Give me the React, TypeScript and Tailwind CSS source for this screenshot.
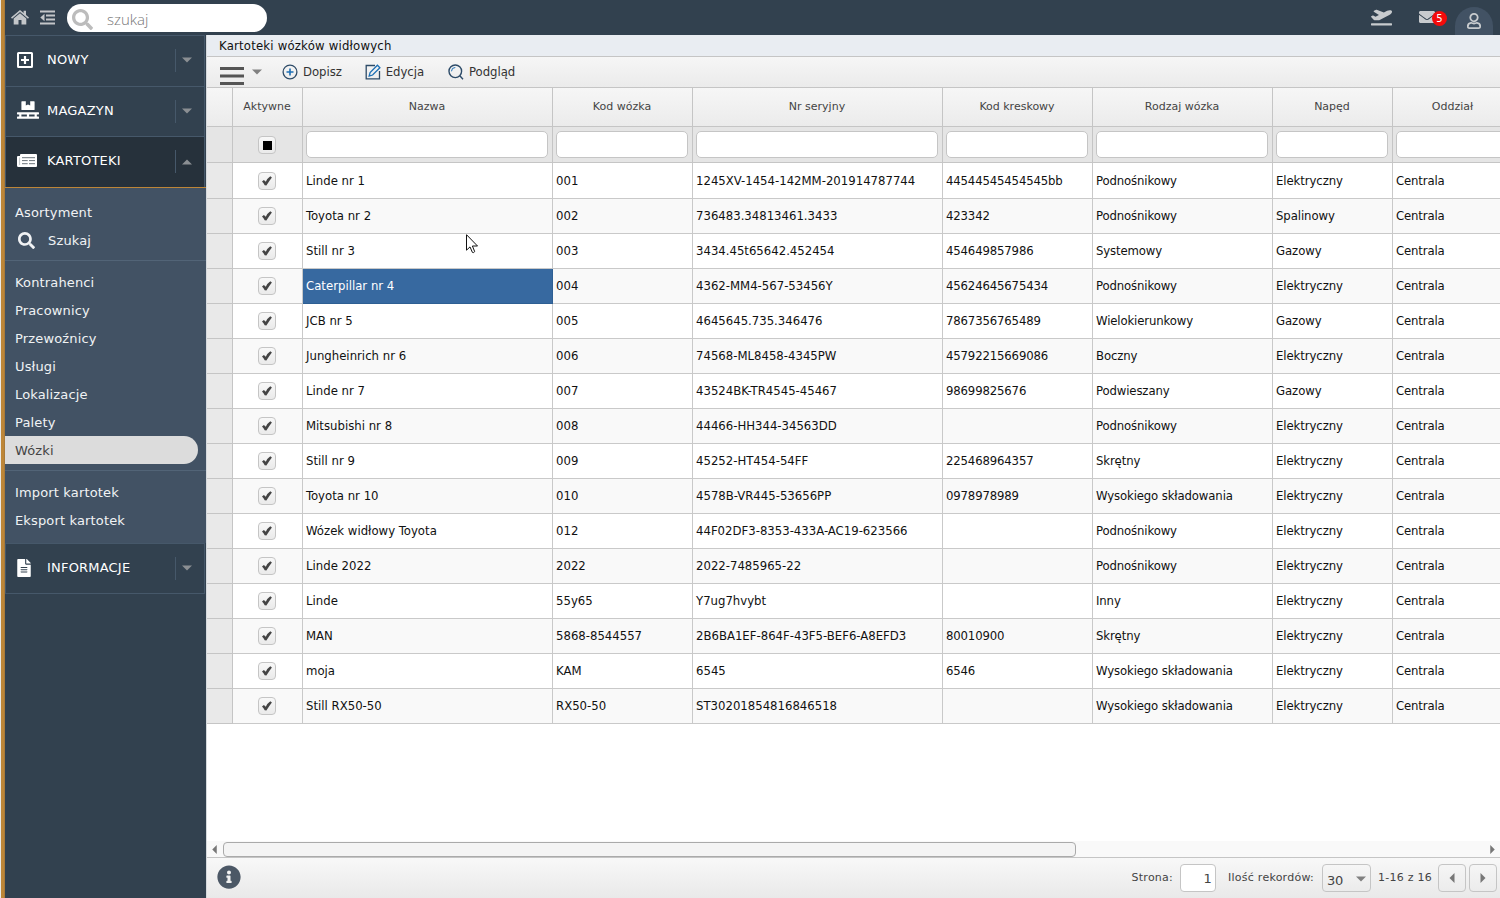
import React, { useState } from 'react';
import { FaSearch, FaPlaneDeparture, FaEnvelope, FaPallet, FaFileAlt, FaInfoCircle } from 'react-icons/fa';

interface Truck {
  name: string;
  code: string;
  serial: string;
  barcode: string;
  kind: string;
  drive: string;
}

const COLUMNS = ['Nazwa', 'Kod wózka', 'Nr seryjny', 'Kod kreskowy', 'Rodzaj wózka', 'Napęd', 'Oddział'];

const ROW = 'grid w-[1307px] grid-cols-[26px_70px_250px_140px_250px_150px_180px_120px_121px]';

const TRUCKS: Truck[] = [
  { name: 'Linde nr 1', code: '001', serial: '1245XV-1454-142MM-201914787744', barcode: '44544545454545bb', kind: 'Podnośnikowy', drive: 'Elektryczny' },
  { name: 'Toyota nr 2', code: '002', serial: '736483.34813461.3433', barcode: '423342', kind: 'Podnośnikowy', drive: 'Spalinowy' },
  { name: 'Still nr 3', code: '003', serial: '3434.45t65642.452454', barcode: '454649857986', kind: 'Systemowy', drive: 'Gazowy' },
  { name: 'Caterpillar nr 4', code: '004', serial: '4362-MM4-567-53456Y', barcode: '45624645675434', kind: 'Podnośnikowy', drive: 'Elektryczny' },
  { name: 'JCB nr 5', code: '005', serial: '4645645.735.346476', barcode: '7867356765489', kind: 'Wielokierunkowy', drive: 'Gazowy' },
  { name: 'Jungheinrich nr 6', code: '006', serial: '74568-ML8458-4345PW', barcode: '45792215669086', kind: 'Boczny', drive: 'Elektryczny' },
  { name: 'Linde nr 7', code: '007', serial: '43524BK-TR4545-45467', barcode: '98699825676', kind: 'Podwieszany', drive: 'Gazowy' },
  { name: 'Mitsubishi nr 8', code: '008', serial: '44466-HH344-34563DD', barcode: '', kind: 'Podnośnikowy', drive: 'Elektryczny' },
  { name: 'Still nr 9', code: '009', serial: '45252-HT454-54FF', barcode: '225468964357', kind: 'Skrętny', drive: 'Elektryczny' },
  { name: 'Toyota nr 10', code: '010', serial: '4578B-VR445-53656PP', barcode: '0978978989', kind: 'Wysokiego składowania', drive: 'Elektryczny' },
  { name: 'Wózek widłowy Toyota', code: '012', serial: '44F02DF3-8353-433A-AC19-623566', barcode: '', kind: 'Podnośnikowy', drive: 'Elektryczny' },
  { name: 'Linde 2022', code: '2022', serial: '2022-7485965-22', barcode: '', kind: 'Podnośnikowy', drive: 'Elektryczny' },
  { name: 'Linde', code: '55y65', serial: 'Y7ug7hvybt', barcode: '', kind: 'Inny', drive: 'Elektryczny' },
  { name: 'MAN', code: '5868-8544557', serial: '2B6BA1EF-864F-43F5-BEF6-A8EFD3', barcode: '80010900', kind: 'Skrętny', drive: 'Elektryczny' },
  { name: 'moja', code: 'KAM', serial: '6545', barcode: '6546', kind: 'Wysokiego składowania', drive: 'Elektryczny' },
  { name: 'Still RX50-50', code: 'RX50-50', serial: 'ST30201854816846518', barcode: '', kind: 'Wysokiego składowania', drive: 'Elektryczny' },
];

const Caret = ({ className, dir = 'down' }: { className?: string; dir?: 'down' | 'up' | 'left' | 'right' }) => {
  const paths = { down: 'M0 2.5h10L5 7.5z', up: 'M0 7.5h10L5 2.5z', left: 'M7.5 0v10L2.5 5z', right: 'M2.5 0v10L7.5 5z' };
  return (
    <svg viewBox="0 0 10 10" className={className} fill="currentColor">
      <path d={paths[dir]} />
    </svg>
  );
};

const HomeIcon = () => (
  <svg viewBox="0 0 18 15" className="h-[15px] w-[18px]" fill="#c3c6c9">
    <path d="M9 0 0 7.6l1 1.1L9 2l8 6.7 1-1.1-3-2.5V.8h-2.4v2.3z" />
    <path d="M9 3.3 2.7 8.6V14.4h4.8V10h3v4.4h4.8V8.6z" />
  </svg>
);

const OutdentIcon = () => (
  <svg viewBox="0 0 15 15" className="h-[15px] w-[15px]" fill="#c3c6c9">
    <path d="M0 .5h15v2H0zM6 4.5h9v2H6zM6 8.5h9v2H6zM0 12.5h15v2H0zM4.5 3.8v7.4L.3 7.5z" />
  </svg>
);

const PlusSquareIcon = () => (
  <svg viewBox="0 0 16 16" className="h-4 w-4" fill="none" stroke="#fff" strokeWidth="2">
    <rect x="1" y="1" width="14" height="14" rx="0.5" />
    <path d="M8 4v8M4 8h8" strokeWidth="2.2" />
  </svg>
);

const CardIcon = () => (
  <svg viewBox="0 0 20 14" className="h-[14px] w-5">
    <path d="M0 3q0-1 1-1h2V1q0-1 1-1h15q1 0 1 1v11q0 1-1 1H1.500Q0 13 0 11.500z" fill="#fff" />
    <path d="M2.600 3.500v7.500" stroke="#9ba1a6" strokeWidth=".6" />
    <path d="M5 3.700h13M5 6.600h5.700M12 6.600h6M5 9.700h5.700M12 9.700h6" stroke="#6b737a" strokeWidth="1" />
  </svg>
);

const UserIcon = () => (
  <svg viewBox="0 0 14 16" className="h-4 w-[14px]" fill="none" stroke="#c8cbce" strokeWidth="1.800">
    <circle cx="7" cy="4.600" r="3.700" />
    <path d="M4 9.800q3 1.400 6 0 3.200.5 3.200 3.600 0 1.700-1.500 1.700H2.300q-1.500 0-1.500-1.700 0-3.100 3.200-3.600z" />
  </svg>
);

const CheckBox = ({ mixed }: { mixed?: boolean }) => (
  <span className="flex h-[18px] w-[18px] items-center justify-center rounded-[4px] border border-[#c5c5c5] bg-gradient-to-b from-[#f8f8f8] to-[#eaeaea]">
    {mixed ? (
      <span className="h-[9px] w-[9px] bg-black"></span>
    ) : (
      <svg viewBox="0 0 10 10" className="h-[10px] w-[10px]" fill="#444">
        <path d="M0 5.600 1.900 4 3.800 5.800Q5.500 2 8.300.2L9.900 1.400Q7.300 4.700 4.400 9.500L2.700 9.300Q1.700 7 0 5.600z" />
      </svg>
    )}
  </span>
);

interface SectionProps {
  icon: React.ReactNode;
  label: string;
  className: string;
}

const Section = ({ icon, label, className }: SectionProps) => {
  const open = label === 'KARTOTEKI';
  return (
    <button className={`flex w-full items-center border-r border-r-[#46586a] pb-[2px] pl-[11px] text-[13px] text-white ${className}`}>
      <span className="flex w-[30px] shrink-0 items-center">{icon}</span>
      <span className="flex-1 text-left tracking-[0.2px]">{label}</span>
      <span className="mt-px flex h-[23px] w-[29px] items-center border-l border-[#46586a] pl-[6px] text-[#8b8f93]">
        <Caret dir={open ? 'up' : 'down'} className="h-[10px] w-[10px]" />
      </span>
    </button>
  );
};

const LINKS = ['Kontrahenci', 'Pracownicy', 'Przewoźnicy', 'Usługi', 'Lokalizacje', 'Palety', 'Wózki'];

const Sidebar = ({ active }: { active: string }) => (
  <nav className="flex w-[201px] shrink-0 flex-col bg-[#32414f] font-['DejaVu_Sans',sans-serif]">
    <div className="mr-px flex flex-col gap-px bg-[#46586a] pt-px pl-px">
      <Section className="h-[50px] bg-[#32414f] pb-[3px]!" icon={<PlusSquareIcon />} label="NOWY" />
      <Section className="h-[49px] bg-[#32414f]" icon={<FaPallet className="mb-[2px] h-[22px] w-[22px] text-white" />} label="MAGAZYN" />
      <Section className="h-[50px] bg-[#26313b]" icon={<CardIcon />} label="KARTOTEKI" />
    </div>
    <div className="h-px bg-[#bd8638]"></div>
    <div className="h-[355px] bg-[#425264] pt-[10px] text-[13px] tracking-[0.15px] text-[#f0f2f4]">
      <div className="flex h-7 items-center pt-[2px] pl-[10px]">Asortyment</div>
      <div className="flex h-7 items-center gap-[13px] pl-[13px]">
        <FaSearch className="h-[17px] w-[17px]" />
        <span className="pt-[2px]">Szukaj</span>
      </div>
      <div className="mt-[6px] mb-[7px] h-px bg-[#526477]"></div>
      {LINKS.map(link => (
        <div
          key={link}
          className={`flex h-7 items-center pt-[2px] pl-[10px] ${link === active ? 'mr-2 rounded-r-full bg-[#dcdcdc] text-[#444]' : ''}`}
        >
          {link}
        </div>
      ))}
      <div className="mt-[6px] mb-[7px] h-px bg-[#526477]"></div>
      <div className="flex h-7 items-center pt-[2px] pl-[10px]">Import kartotek</div>
      <div className="flex h-7 items-center pt-[2px] pl-[10px]">Eksport kartotek</div>
    </div>
    <div className="mr-px border-b border-[#46586a] bg-[#46586a] pt-px pl-px">
      <Section className="h-[49px] bg-[#32414f]" icon={<FaFileAlt className="h-[18px] w-[14px]" />} label="INFORMACJE" />
    </div>
  </nav>
);

const TopBar = () => (
  <header className="flex h-[35px] shrink-0 items-center bg-[#32414f] pl-[6px]">
    <HomeIcon />
    <span className="ml-[11px]"><OutdentIcon /></span>
    <label className="ml-3 flex h-7 w-[200px] items-center rounded-full bg-white pl-[5px]">
      <FaSearch className="mt-[3px] h-[21px] w-[21px] shrink-0 text-[#bcbcbc]" />
      <input placeholder="szukaj" className="mt-[3px] ml-[14px] w-32 font-['Open_Sans',sans-serif] text-[15px] font-light outline-none placeholder:text-[#777]" />
    </label>
    <div className="ml-auto flex h-full items-center">
      <FaPlaneDeparture className="mb-px h-[20px] w-[21px] text-[#c8cbce]" />
      <span className="relative ml-[27px]">
        <FaEnvelope className="mb-px h-4 w-4 text-[#c8cbce]" />
        <span className="absolute top-[2px] left-[13px] flex h-[15px] w-[15px] items-center justify-center rounded-full bg-[#f40b0b] font-['DejaVu_Sans',sans-serif] text-[10px] text-white">5</span>
      </span>
      <span className="mr-[7px] ml-[20px] flex h-7 w-[38px] items-start justify-center self-end rounded-t-full bg-[#425264] pt-[6px]">
        <UserIcon />
      </span>
    </div>
  </header>
);

const Toolbar = () => (
  <div className="flex h-[31px] shrink-0 items-center border-b border-[#c5c5c5] bg-gradient-to-b from-[#f6f6f6] to-[#ebebeb] pl-[13px] text-[13px] tracking-[-0.05px] text-[#333]">
    <button className="flex items-center">
      <svg viewBox="0 0 24 18" className="mt-[7px] h-[18px] w-6" fill="#555">
        <path d="M0 0h24v3H0zM0 7.500h24v3H0zM0 15h24v3H0z" />
      </svg>
      <Caret className="ml-2 h-[10px] w-[10px] text-[#808080]" />
    </button>
    <button className="ml-5 flex items-center gap-[5px]">
      <svg viewBox="0 0 16 16" className="h-4 w-4" fill="none" stroke="#2d4b68" strokeWidth="1.300">
        <circle cx="8" cy="8" r="6.900" />
        <path d="M8 4.500v7M4.500 8h7" stroke="#1c6fb5" strokeWidth="1.600" />
      </svg>
      Dopisz
    </button>
    <button className="ml-[23px] flex items-center gap-[5px]">
      <svg viewBox="0 0 16 16" className="h-4 w-4" fill="none" stroke="#2d4b68" strokeWidth="1.300">
        <path d="M10 1.500H1.200v13.300h13.300V7" />
        <path d="m4.200 12 .9-3.500 7.300-7.300 2.500 2.500L7.600 11z" stroke="#1c6fb5" />
      </svg>
      Edycja
    </button>
    <button className="ml-6 flex items-center gap-[5px]">
      <svg viewBox="0 0 16 16" className="h-4 w-4" fill="none" stroke="#2d4b68" strokeWidth="1.400">
        <circle cx="7.300" cy="7.300" r="6.300" />
        <path d="m11.800 11.800 3.200 3.500" />
        <path d="M3.500 7.300a3.800 3.800 0 0 1 3.800-3.800" stroke="#1c6fb5" strokeWidth="1" />
      </svg>
      Podgląd
    </button>
  </div>
);

const TruckRow = ({ truck, index, selected, onSelect }: { truck: Truck; index: number; selected: boolean; onSelect: () => void }) => {
  const cell = 'flex items-center border-r border-b border-[#c9c9c9] pl-[3px] whitespace-nowrap';
  return (
    <div className={`${ROW} ${index === 0 ? 'h-9' : 'h-[35px]'} ${index % 2 ? 'bg-[#f9f9f9]' : 'bg-white'}`}>
      <div className="border-r border-b border-[#c5c5c5] bg-[#e9e9e9]"></div>
      <div className="flex items-center justify-center border-r border-b border-[#c9c9c9] pr-px"><CheckBox /></div>
      <div onClick={onSelect} className={`tracking-[0.01px] ${selected ? `${cell} border-[#2e5f93]! bg-[#3769a0] text-white` : cell}`}>{truck.name}</div>
      <div className={`tracking-[0px] ${cell}`}>{truck.code}</div>
      <div className={`tracking-[0px] ${cell}`}>{truck.serial}</div>
      <div className={`tracking-[-0.15px] ${cell}`}>{truck.barcode}</div>
      <div className={`tracking-[-0.13px] ${cell}`}>{truck.kind}</div>
      <div className={`tracking-[-0.08px] ${cell}`}>{truck.drive}</div>
      <div className={`tracking-[-0.15px] ${cell}`}>Centrala</div>
    </div>
  );
};

const Grid = () => {
  const [selected, setSelected] = useState(3);
  const [filters, setFilters] = useState<Record<string, string>>({});

  return (
    <div className="min-h-0 flex-1 overflow-hidden bg-white">
      <div className={`${ROW} h-[39px] bg-gradient-to-b from-[#f6f6f6] to-[#ebebeb] font-['DejaVu_Sans',sans-serif] text-[11px] text-[#444]`}>
        <div className="border-r border-b border-[#c5c5c5]"></div>
        <div className="flex items-center justify-center border-r border-b border-[#c5c5c5] pt-px pr-px">Aktywne</div>
        {COLUMNS.map(col => (
          <div key={col} className="flex items-center justify-center border-r border-b border-[#c5c5c5] pt-px pr-px">{col}</div>
        ))}
      </div>
      <div className={`${ROW} h-9 bg-[#e5e5e5]`}>
        <div className="border-r border-b border-[#c5c5c5]"></div>
        <div className="flex items-center justify-center border-r border-b border-[#c5c5c5] pt-px pr-px"><CheckBox mixed /></div>
        {COLUMNS.map(col => (
          <div key={col} className="border-r border-b border-[#c5c5c5] pt-1 pr-1 pl-[3px]">
            <input
              value={filters[col] || ''}
              onChange={e => setFilters({ ...filters, [col]: e.target.value })}
              className="block h-[27px] w-full rounded-[5px] border border-[#c5c5c5] bg-white px-1 outline-none"
            />
          </div>
        ))}
      </div>
      <div className="text-[13px] text-[#111]">
        {TRUCKS.map((truck, i) => (
          <TruckRow key={truck.code} truck={truck} index={i} selected={selected === i} onSelect={() => setSelected(i)} />
        ))}
      </div>
    </div>
  );
};

const Footer = () => (
  <footer className="shrink-0 font-['DejaVu_Sans',sans-serif] text-[11px] text-[#444]">
    <div className="flex h-[17px] items-center border-b border-[#c5c5c5] bg-[#f9f9f9] pl-[3px] text-[#777]">
      <Caret dir="left" className="h-[9px] w-[9px]" />
      <div className="ml-1 h-[15px] w-[853px] rounded-[4px] border border-[#aaa] bg-[#f4f4f4]"></div>
      <Caret dir="right" className="mr-[3px] ml-auto h-[9px] w-[9px]" />
    </div>
    <div className="flex h-10 items-center bg-gradient-to-b from-[#f8f8f8] to-[#e9e9e9] pr-[3px] pl-[10px] tracking-[0.25px]">
      <FaInfoCircle className="mb-[2px] h-6 w-6 text-[#4c5866]" />
      <span className="ml-auto">Strona:</span>
      <span className="ml-[7px] flex h-7 w-9 items-center justify-end rounded-[4px] border border-[#c5c5c5] bg-white pt-[2px] pr-[3px] text-[13px]">1</span>
      <span className="ml-3">Ilość rekordów:</span>
      <span className="ml-2 flex h-7 w-[49px] items-center justify-between rounded-[4px] border border-[#c5c5c5] bg-gradient-to-b from-[#f6f6f6] to-[#ebebeb] pt-[5px] pr-1 pl-1 text-[13px] tracking-[-0.3px]">
        30
        <Caret className="mb-1 h-[10px] w-[10px] text-[#808080]" />
      </span>
      <span className="ml-[7px]">1-16 z 16</span>
      <button className="ml-[6px] flex h-7 w-7 items-center justify-center rounded-[4px] border border-[#c5c5c5] text-[#777]"><Caret dir="left" className="h-[10px] w-[10px]" /></button>
      <button className="ml-[3px] flex h-7 w-7 items-center justify-center rounded-[4px] border border-[#c5c5c5] text-[#777]"><Caret dir="right" className="h-[10px] w-[10px]" /></button>
    </div>
  </footer>
);

const App = () => (
  <div className="relative flex h-[898px] w-[1500px] overflow-hidden font-['DejaVu_Sans_Condensed','DejaVu_Sans',sans-serif]">
    <div className="w-[5px] shrink-0 border-r border-l border-r-[#a87a3a] border-l-[#e9e9e9] bg-[#bd8638]"></div>
    <div className="flex min-w-0 flex-1 flex-col">
      <TopBar />
      <div className="flex min-h-0 flex-1">
        <Sidebar active="Wózki" />
        <main className="flex min-w-0 flex-1 flex-col border-l border-[#d5d9dd]">
          <div className="flex h-[22px] shrink-0 items-center border-b border-[#c5c5c5] bg-[#e9edf2] pl-3 text-[13px] tracking-[0.2px] text-[#111]">Kartoteki wózków widłowych</div>
          <Toolbar />
          <Grid />
          <Footer />
        </main>
      </div>
    </div>
    <svg viewBox="0 0 12 20" className="pointer-events-none absolute top-[234px] left-[466px] h-5 w-3" fill="#fff" stroke="#111" strokeWidth="1">
      <path d="M.5.7v15.500l3.500-3.300 2.400 5.500q1.300.7 2.300-.8L6.400 12h5.100z" />
    </svg>
  </div>
);

export default App;
